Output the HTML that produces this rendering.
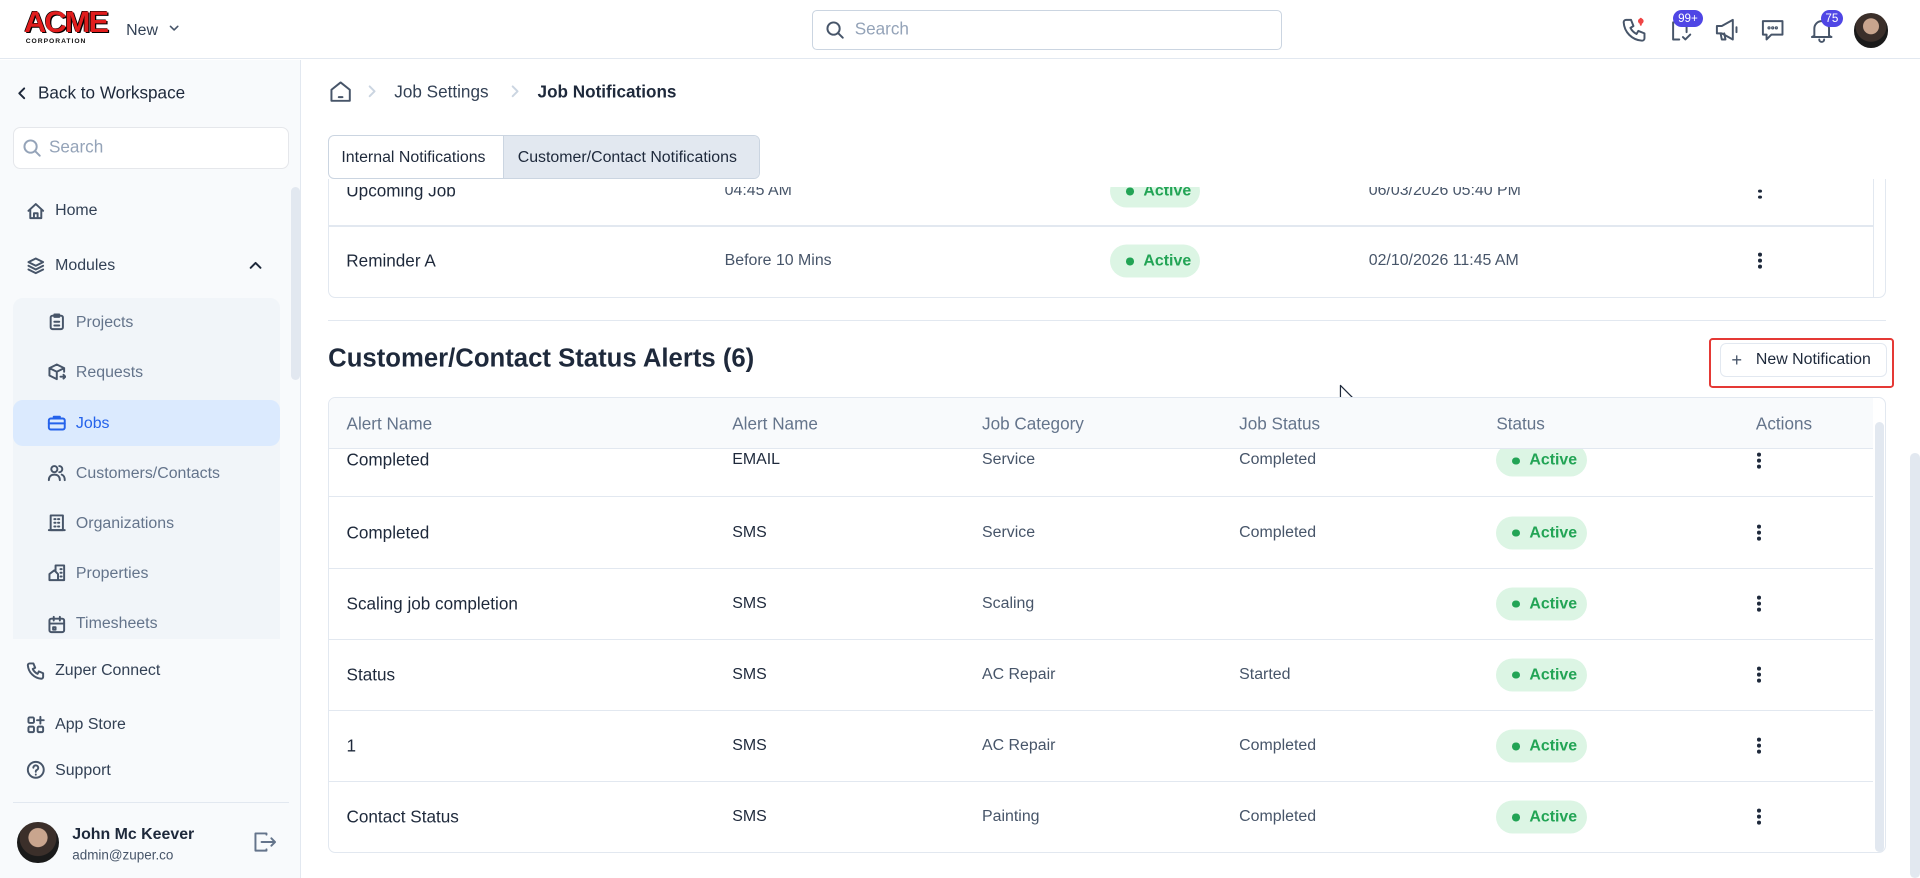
<!DOCTYPE html>
<html><head><meta charset="utf-8"><style>
*{box-sizing:border-box;margin:0;padding:0}
html,body{width:1920px;height:878px;overflow:hidden;background:#fff}
#w{zoom:1.22449;width:1568px;height:717px;position:relative;font-family:"Liberation Sans",sans-serif;color:#1e293b;overflow:hidden}
.a{position:absolute}
.t{position:absolute;white-space:nowrap;transform:translateY(-50%)}
svg{position:absolute;fill:none;stroke:#475569;stroke-width:1.6;stroke-linecap:round;stroke-linejoin:round}
.pill{position:absolute;height:27px;border-radius:14px;background:#dcf5e4;color:#22a455;font-size:13px;font-weight:bold;line-height:27px;padding-left:27px;transform:translateY(-50%)}
.pill:before{content:"";position:absolute;left:13px;top:11px;width:6px;height:6px;border-radius:50%;background:#22a455}
.keb{position:absolute;width:3px;transform:translateY(-50%)}
.keb i{display:block;width:3px;height:3px;border-radius:50%;background:#1e293b;margin:2px 0}
.side .t{font-size:13px;color:#334155}
.sub .t{color:#64748b}
</style></head><body><div id="w">
<!-- header -->
<div class="a" style="left:0;top:0;width:1568px;height:48px;border-bottom:1px solid #e2e8f0;background:#fff"></div>
<div class="a" style="left:20px;top:8px;font:900 24px 'Liberation Sans';color:#e11d1d;letter-spacing:-1.5px;line-height:22px;transform:scaleX(1.05);transform-origin:left;text-shadow:1px 1px 0 #000,-0.5px -0.5px 0 #000">ACME</div>
<div class="a" style="left:21px;top:31px;font:bold 5.5px 'Liberation Sans';color:#111;letter-spacing:.8px">CORPORATION</div>
<div class="t" style="left:103px;top:25px;font-size:13px;color:#334155">New</div>
<svg style="left:137px;top:18px" width="10" height="10" viewBox="0 0 10 10"><path d="M2 3.5l3 3 3-3" stroke-width="1.3"/></svg>
<div class="a" style="left:663px;top:8px;width:384px;height:33px;border:1px solid #cbd5e1;border-radius:4px"></div>
<svg style="left:674px;top:16px" width="16" height="16" viewBox="0 0 16 16"><circle cx="7" cy="7" r="5"/><path d="M11 11l3.5 3.5"/></svg>
<div class="t" style="left:698px;top:24px;font-size:14px;color:#94a3b8">Search</div>
<svg style="left:1323px;top:12px" width="24" height="24" viewBox="0 0 24 24"><path d="M5 4h4l2 5-2.5 1.5a11 11 0 0 0 5 5L15 13l5 2v4a2 2 0 0 1-2 2A16 16 0 0 1 3 6a2 2 0 0 1 2-2"/><path d="M17 3v5" stroke="#ef4444"/><circle cx="17" cy="5" r="1.5" stroke="#ef4444"/></svg>
<svg style="left:1361px;top:12px" width="24" height="24" viewBox="0 0 24 24"><path d="M10 20H5V6h5M14 6h2v8"/><path d="M13 18l2 2 4-4"/></svg>
<div class="a" style="left:1366px;top:8px;width:25px;height:14px;border-radius:7px;background:#4f46e5;color:#fff;font-size:9.5px;text-align:center;line-height:14px">99+</div>
<svg style="left:1398px;top:12px" width="24" height="24" viewBox="0 0 24 24"><path d="M4 9h4l9-5v16l-9-5H4z"/><path d="M7 15l1 5h3l-1-5"/><path d="M20 10v4"/></svg>
<svg style="left:1436px;top:12px" width="24" height="24" viewBox="0 0 24 24"><path d="M4 5h16v11H11l-4 4v-4H4z"/><circle cx="9" cy="10.5" r=".5"/><circle cx="12" cy="10.5" r=".5"/><circle cx="15" cy="10.5" r=".5"/></svg>
<svg style="left:1476px;top:12px" width="24" height="24" viewBox="0 0 24 24"><path d="M6 17V11a6 6 0 0 1 12 0v6l2 1H4z"/><path d="M10 20a2 2 0 0 0 4 0"/></svg>
<div class="a" style="left:1487px;top:8px;width:18px;height:14px;border-radius:7px;background:#4f46e5;color:#fff;font-size:9.5px;text-align:center;line-height:14px">75</div>
<div class="a" style="left:1514px;top:11px;width:28px;height:28px;border-radius:50%;background:radial-gradient(circle at 50% 38%,#c9a58e 0 28%,#3b2f2a 30% 55%,#1a1a1a 57%)"></div>
<!-- sidebar -->
<div class="a side" style="left:0;top:49px;width:246px;height:668px;background:#f8fafc;border-right:1px solid #e2e8f0"></div>
<div class="side">
<svg style="left:12px;top:70px" width="12" height="12" viewBox="0 0 12 12"><path d="M7.5 2L3.5 6l4 4" stroke="#1e293b"/></svg>
<div class="t" style="left:31px;top:76px;font-size:14px;color:#1e293b">Back to Workspace</div>
<div class="a" style="left:11px;top:104px;width:225px;height:34px;background:#fff;border:1px solid #e5e7eb;border-radius:6px"></div>
<svg style="left:18px;top:113px" width="16" height="16" viewBox="0 0 16 16"><circle cx="7" cy="7" r="5" stroke="#94a3b8"/><path d="M11 11l3.5 3.5" stroke="#94a3b8"/></svg>
<div class="t" style="left:40px;top:120px;font-size:14px;color:#94a3b8">Search</div>
<svg style="left:21px;top:164px" width="16" height="16" viewBox="0 0 16 16"><path d="M2 8l6-5.5L14 8M3.5 7v7h9V7M6.5 14v-4h3v4"/></svg>
<div class="t" style="left:45px;top:172px">Home</div>
<svg style="left:21px;top:209px" width="16" height="16" viewBox="0 0 16 16"><path d="M8 2l6 3-6 3-6-3zM2 8l6 3 6-3M2 11l6 3 6-3"/></svg>
<div class="t" style="left:45px;top:217px">Modules</div>
<svg style="left:202px;top:211px" width="14" height="12" viewBox="0 0 14 12"><path d="M3 8l4-4 4 4" stroke="#1e293b"/></svg>
<div class="a" style="left:11px;top:243px;width:218px;height:279px;background:#f1f5f9;border-radius:8px 8px 0 0"></div>
<div class="a" style="left:11px;top:327px;width:218px;height:37px;background:#dbeafe;border-radius:8px"></div>
<div class="sub">
<svg style="left:38px;top:255px" width="16" height="16" viewBox="0 0 16 16"><rect x="3" y="3" width="10" height="11" rx="1.5"/><path d="M6 2h4v2H6zM6 8h4M6 11h4"/></svg>
<div class="t" style="left:62px;top:264px">Projects</div>
<svg style="left:38px;top:296px" width="16" height="16" viewBox="0 0 16 16"><path d="M2 5l6-3 6 3v3M2 5v6l6 3M2 5l6 3 6-3M8 8v6M11 12h4M13.5 10.5L15 12l-1.5 1.5"/></svg>
<div class="t" style="left:62px;top:305px">Requests</div>
<svg style="left:38px;top:337px;stroke:#2563eb" width="16" height="16" viewBox="0 0 16 16"><rect x="1.5" y="4.5" width="13" height="9" rx="1.5"/><path d="M5.5 4.5V3h5v1.5M1.5 8.5h13"/></svg>
<div class="t" style="left:62px;top:346px;color:#2563eb">Jobs</div>
<svg style="left:38px;top:378px" width="16" height="16" viewBox="0 0 16 16"><circle cx="6" cy="5" r="2.5"/><path d="M1.5 14c0-3 2-4.5 4.5-4.5S10.5 11 10.5 14M10 2.5a2.5 2.5 0 0 1 0 5M12 9.5c1.5.5 2.5 2 2.5 4.5"/></svg>
<div class="t" style="left:62px;top:387px">Customers/Contacts</div>
<svg style="left:38px;top:419px" width="16" height="16" viewBox="0 0 16 16"><rect x="3" y="2" width="10" height="12"/><path d="M1.5 14h13M6 5h1M9 5h1M6 8h1M9 8h1M6 11h1M9 11h1"/></svg>
<div class="t" style="left:62px;top:428px">Organizations</div>
<svg style="left:38px;top:460px" width="16" height="16" viewBox="0 0 16 16"><path d="M2 14V9l4-3 3 3v5zM7 6V2h7v12H9M11 5h1M11 8h1M11 11h1"/></svg>
<div class="t" style="left:62px;top:469px">Properties</div>
<svg style="left:38px;top:502px" width="16" height="16" viewBox="0 0 16 16"><rect x="2" y="3" width="12" height="11" rx="1.5"/><path d="M2 7h12M5.5 1.5v3M10.5 1.5v3M5 10h2v2H5z"/></svg>
<div class="t" style="left:62px;top:510px">Timesheets</div>
</div>
<svg style="left:21px;top:540px" width="16" height="16" viewBox="0 0 16 16"><path d="M3 2h3l1.5 3.5-2 1a8 8 0 0 0 4 4l1-2L14 10v3a1.5 1.5 0 0 1-1.5 1.5A12 12 0 0 1 1.5 3.5 1.5 1.5 0 0 1 3 2"/></svg>
<div class="t" style="left:45px;top:548px">Zuper Connect</div>
<svg style="left:21px;top:584px" width="16" height="16" viewBox="0 0 16 16"><rect x="2" y="2" width="4.5" height="4.5" rx="1"/><rect x="2" y="9.5" width="4.5" height="4.5" rx="1"/><rect x="9.5" y="9.5" width="4.5" height="4.5" rx="1"/><path d="M11.75 1.5v5.5M9 4.25h5.5"/></svg>
<div class="t" style="left:45px;top:592px">App Store</div>
<svg style="left:21px;top:621px" width="16" height="16" viewBox="0 0 16 16"><circle cx="8" cy="8" r="6.5"/><path d="M6 6.3a2 2 0 1 1 2.5 2c-.4.2-.5.5-.5 1v.3M8 11.8v.2"/></svg>
<div class="t" style="left:45px;top:630px">Support</div>
<div class="a" style="left:11px;top:655px;width:225px;height:1px;background:#e2e8f0"></div>
<div class="a" style="left:14px;top:671px;width:34px;height:34px;border-radius:50%;background:radial-gradient(circle at 50% 38%,#c9a58e 0 28%,#3b2f2a 30% 55%,#1a1a1a 57%)"></div>
<div class="t" style="left:59px;top:682px;font-size:13px;font-weight:bold;color:#1e293b">John Mc Keever</div>
<div class="t" style="left:59px;top:698px;font-size:11px;color:#475569">admin@zuper.co</div>
<svg style="left:207px;top:679px" width="20" height="18" viewBox="0 0 20 18"><path d="M11 3V2H2v14h9v-1M7 9h11M15 6l3 3-3 3" stroke="#64748b"/></svg>
<div class="a" style="left:238px;top:153px;width:7px;height:157px;background:#e2e8f0;border-radius:4px"></div>
</div>
<!-- main -->
<svg style="left:269px;top:65px" width="19" height="19" viewBox="0 0 19 19"><path d="M2 17V8l7.5-6L17 8v9z"/><path d="M8 14h3"/></svg>
<svg style="left:299px;top:69px" width="10" height="12" viewBox="0 0 10 12"><path d="M3 2l4 4-4 4" stroke="#cbd5e1"/></svg>
<div class="t" style="left:322px;top:75px;font-size:14px;color:#334155">Job Settings</div>
<svg style="left:416px;top:69px" width="10" height="12" viewBox="0 0 10 12"><path d="M3 2l4 4-4 4" stroke="#cbd5e1"/></svg>
<div class="t" style="left:439px;top:75px;font-size:14px;font-weight:bold;color:#1e293b">Job Notifications</div>

<!-- top table (scrolled) -->
<div class="a" style="left:268px;top:146px;width:1272px;height:97px;border:1px solid #e2e8f0;border-top:none;border-radius:0 0 6px 6px;overflow:hidden;font-size:13px">
 <div class="a" style="left:0;top:38px;width:1262px;height:1px;background:#e2e8f0"></div>
 <div class="t" style="left:14px;top:10px;font-size:14px">Upcoming Job</div>
 <div class="t" style="left:323px;top:10px;color:#475569">04:45 AM</div>
 <div class="pill" style="left:638px;top:10px;width:73px">Active</div>
 <div class="t" style="left:849px;top:10px;color:#475569">06/03/2026 05:40 PM</div>
 <div class="keb" style="left:1167px;top:10px"><i></i><i></i><i></i></div>
 <div class="t" style="left:14px;top:67px;font-size:14px">Reminder A</div>
 <div class="t" style="left:323px;top:67px;color:#475569">Before 10 Mins</div>
 <div class="pill" style="left:638px;top:67px;width:73px">Active</div>
 <div class="t" style="left:849px;top:67px;color:#475569">02/10/2026 11:45 AM</div>
 <div class="keb" style="left:1167px;top:67px"><i></i><i></i><i></i></div>
 <div class="a" style="left:0;top:0;width:1262px;height:7px;background:#fff"></div>
 <div class="a" style="left:1261px;top:0;width:1px;height:97px;background:#e2e8f0"></div>
</div>
<!-- tabs -->
<div class="a" style="left:268px;top:110px;width:353px;height:36px;border:1px solid #cbd5e1;border-radius:5px;overflow:hidden;background:#fff;font-size:13px">
 <div class="a" style="left:142px;top:0;width:211px;height:36px;background:#e2e8f0;border-left:1px solid #cbd5e1"></div>
 <div class="t" style="left:10px;top:18px;color:#1e293b">Internal Notifications</div>
 <div class="t" style="left:154px;top:18px;color:#1e293b">Customer/Contact Notifications</div>
</div>
<div class="a" style="left:268px;top:261px;width:1272px;height:1px;background:#e2e8f0"></div>
<div class="t" style="left:268px;top:293px;font-size:21px;font-weight:bold;color:#1e293b">Customer/Contact Status Alerts (6)</div>
<div class="a" style="left:1396px;top:276px;width:151px;height:41px;border:2px solid #e53935;border-radius:3px"></div>
<div class="a" style="left:1405px;top:280px;width:136px;height:28px;border:1px solid #e2e8f0;border-radius:5px;background:#fff"></div>
<div class="t" style="left:1414px;top:294px;font-size:15px;color:#475569">+</div>
<div class="t" style="left:1434px;top:294px;font-size:13px;color:#1e293b">New Notification</div>
<svg style="left:1093px;top:313px;stroke:#1e293b;stroke-width:1;fill:#fff" width="18" height="24" viewBox="0 0 18 24"><path d="M2 2v17l4-4 3 6 2-1-3-6h6z"/></svg>
<!-- table 2 -->
<div class="a" style="left:268px;top:324px;width:1272px;height:373px;border:1px solid #e2e8f0;border-radius:6px"></div>
<div class="a" style="left:268px;top:367px;width:1272px;height:330px;overflow:hidden;font-size:13px">
 <div class="a" style="left:1px;top:38px;width:1261px;height:1px;background:#e2e8f0"></div>
 <div class="a" style="left:1px;top:97px;width:1261px;height:1px;background:#e2e8f0"></div>
 <div class="a" style="left:1px;top:155px;width:1261px;height:1px;background:#e2e8f0"></div>
 <div class="a" style="left:1px;top:213px;width:1261px;height:1px;background:#e2e8f0"></div>
 <div class="a" style="left:1px;top:271px;width:1261px;height:1px;background:#e2e8f0"></div>

 <div class="t" style="left:15px;top:9px;font-size:14px">Completed</div><div class="t" style="left:330px;top:9px">EMAIL</div><div class="t" style="left:534px;top:9px;color:#475569">Service</div><div class="t" style="left:744px;top:9px;color:#475569">Completed</div><div class="pill" style="left:954px;top:9px;width:74px">Active</div><div class="keb" style="left:1167px;top:9px"><i></i><i></i><i></i></div>

 <div class="t" style="left:15px;top:68px;font-size:14px">Completed</div><div class="t" style="left:330px;top:68px">SMS</div><div class="t" style="left:534px;top:68px;color:#475569">Service</div><div class="t" style="left:744px;top:68px;color:#475569">Completed</div><div class="pill" style="left:954px;top:68px;width:74px">Active</div><div class="keb" style="left:1167px;top:68px"><i></i><i></i><i></i></div>

 <div class="t" style="left:15px;top:126px;font-size:14px">Scaling job completion</div><div class="t" style="left:330px;top:126px">SMS</div><div class="t" style="left:534px;top:126px;color:#475569">Scaling</div><div class="pill" style="left:954px;top:126px;width:74px">Active</div><div class="keb" style="left:1167px;top:126px"><i></i><i></i><i></i></div>

 <div class="t" style="left:15px;top:184px;font-size:14px">Status</div><div class="t" style="left:330px;top:184px">SMS</div><div class="t" style="left:534px;top:184px;color:#475569">AC Repair</div><div class="t" style="left:744px;top:184px;color:#475569">Started</div><div class="pill" style="left:954px;top:184px;width:74px">Active</div><div class="keb" style="left:1167px;top:184px"><i></i><i></i><i></i></div>

 <div class="t" style="left:15px;top:242px;font-size:14px">1</div><div class="t" style="left:330px;top:242px">SMS</div><div class="t" style="left:534px;top:242px;color:#475569">AC Repair</div><div class="t" style="left:744px;top:242px;color:#475569">Completed</div><div class="pill" style="left:954px;top:242px;width:74px">Active</div><div class="keb" style="left:1167px;top:242px"><i></i><i></i><i></i></div>

 <div class="t" style="left:15px;top:300px;font-size:14px">Contact Status</div><div class="t" style="left:330px;top:300px">SMS</div><div class="t" style="left:534px;top:300px;color:#475569">Painting</div><div class="t" style="left:744px;top:300px;color:#475569">Completed</div><div class="pill" style="left:954px;top:300px;width:74px">Active</div><div class="keb" style="left:1167px;top:300px"><i></i><i></i><i></i></div>
</div>
<div class="a" style="left:269px;top:325px;width:1261px;height:42px;background:#f8fafc;border-bottom:1px solid #e2e8f0;border-radius:6px 0 0 0;font-size:14px;color:#64748b">
 <div class="t" style="left:14px;top:21px">Alert Name</div>
 <div class="t" style="left:329px;top:21px">Alert Name</div>
 <div class="t" style="left:533px;top:21px">Job Category</div>
 <div class="t" style="left:743px;top:21px">Job Status</div>
 <div class="t" style="left:953px;top:21px">Status</div>
 <div class="t" style="left:1165px;top:21px">Actions</div>
</div>
<div class="a" style="left:1531px;top:345px;width:8px;height:351px;background:#e2e8f0;border-radius:4px"></div>
<div class="a" style="left:1560px;top:370px;width:8px;height:347px;background:#e2e8f0;border-radius:4px"></div>
</div></body></html>
